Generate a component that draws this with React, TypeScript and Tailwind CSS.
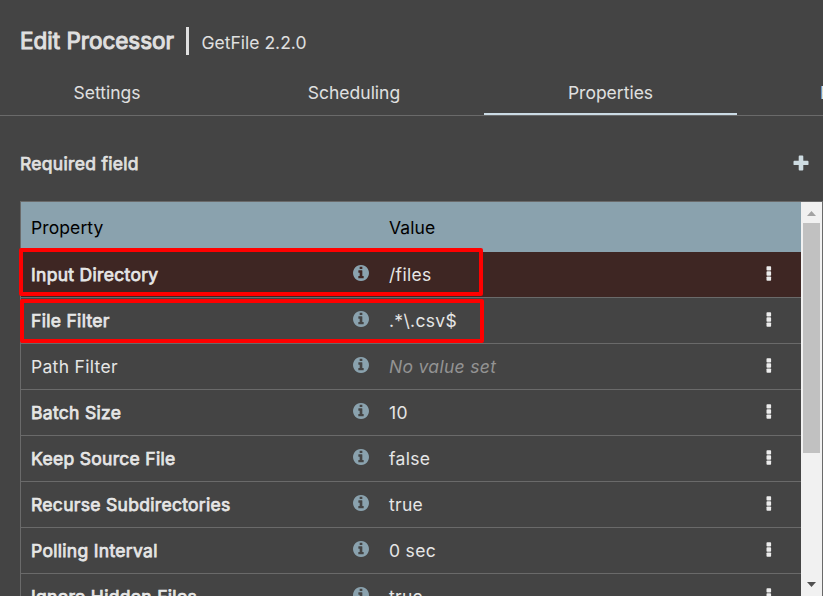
type Property = { name: string; value?: string; required: boolean; invalid?: boolean };

const properties: Property[] = [
  { name: 'Input Directory', value: '/files', required: true, invalid: true },
  { name: 'File Filter', value: '.*\\.csv$', required: true },
  { name: 'Path Filter', required: false },
  { name: 'Batch Size', value: '10', required: true },
  { name: 'Keep Source File', value: 'false', required: true },
  { name: 'Recurse Subdirectories', value: 'true', required: true },
  { name: 'Polling Interval', value: '0 sec', required: true },
  { name: 'Ignore Hidden Files', value: 'true', required: true },
];

function InfoIcon() {
  return (
    <svg className="mb-[2.5px]" width="16" height="16" viewBox="0 0 1536 1536" fill="#8aa2ae">
      <path d="M1024 1248v-160q0-14-9-23t-23-9h-96V544q0-14-9-23t-23-9H544q-14 0-23 9t-9 23v160q0 14 9 23t23 9h96v320h-96q-14 0-23 9t-9 23v160q0 14 9 23t23 9h448q14 0 23-9t9-23zM896 352V192q0-14-9-23t-23-9H672q-14 0-23 9t-9 23v160q0 14 9 23t23 9h192q14 0 23-9t9-23zM1536 768q0 209-103 385.5T1153.500 1433 768 1536t-385.500-103T103 1153.500 0 768t103-385.500T382.500 103 768 0t385.500 103T1433 382.500 1536 768z" />
    </svg>
  );
}

function MoreIcon() {
  return (
    <svg width="6" height="15" viewBox="0 0 6 15" fill="#ececec">
      <rect x="0.5" y="0.2" width="4.6" height="4.4" rx="0.8" />
      <rect x="0.5" y="5.3" width="4.6" height="4.4" rx="0.8" />
      <rect x="0.5" y="10.4" width="4.6" height="4.4" rx="0.8" />
    </svg>
  );
}

function PropertyRow({ property }: { property: Property }) {
  return (
    <div
      className={`flex h-[46px] shrink-0 items-center border-b border-[#6a6a6a] pl-2.5 tracking-[0.31px] ${property.invalid ? 'bg-[#3e2623]' : ''}`}
    >
      <span className={`w-[322px] ${property.required ? '[-webkit-text-stroke:0.75px_#e6e6e6]' : ''}`}>
        {property.name}
      </span>
      <InfoIcon />
      <span className={`ml-5 flex-1 ${property.value ? '' : 'text-[#939393] italic'}`}>
        {property.value ?? 'No value set'}
      </span>
      <span className="mr-[29px] mb-0.5 flex">
        <MoreIcon />
      </span>
    </div>
  );
}

export default function App() {
  return (
    <div className="relative flex h-[596px] w-[823px] flex-col overflow-hidden bg-[#444444] font-['Inter',sans-serif] text-[17.5px] leading-6 text-[#e6e6e6]">
      <header className="flex h-[70px] shrink-0 items-center pt-3 pl-5 whitespace-nowrap">
        <h1 className="w-[166px] text-[22.5px] text-[#e0e0e0] [-webkit-text-stroke:1px_#e0e0e0]">Edit Processor</h1>
        <div className="h-7 w-[3px] bg-[#e0e0e0]" />
        <span className="mt-1 ml-[12.5px] text-[#e0e0e0]">GetFile 2.2.0</span>
      </header>

      <nav className="flex h-[46px] shrink-0 border-b border-[#6a6a6a] text-[#e0e0e0]">
        <div className="flex w-[224px] shrink-0 items-center justify-center pr-2.5">Settings</div>
        <div className="flex w-[260px] shrink-0 items-center justify-center">Scheduling</div>
        <div className="flex w-[253px] shrink-0 items-center justify-center border-b-2 border-[#cbdbe5] pt-0.5">
          Properties
        </div>
        <div className="flex shrink-0 items-center pl-[83px]">Relationships</div>
      </nav>

      <div className="flex h-[85px] shrink-0 items-center justify-between pr-3.5 pl-5">
        <span className="mt-2.5 tracking-[0.31px] text-[#e0e0e0] [-webkit-text-stroke:0.75px_#e0e0e0]">Required field</span>
        <svg className="mt-2" width="16" height="16" viewBox="0 0 16 16" fill="#cddbe1">
          <path d="M6.6 0.5h2.8q.9 0 .9.9v4.4h4.3q.9 0 .9.9v2.5q0 .9-.9.9h-4.3v4.4q0 .9-.9.9H6.6q-.9 0-.9-.9v-4.4H1.4q-.9 0-.9-.9V6.7q0-.9.9-.9h4.3V1.4q0-.9.9-.9z" />
        </svg>
      </div>

      <div className="ml-5 flex h-[395px] w-[803px] overflow-hidden border-t border-r border-l border-[#6a6a6a]">
        <div className="flex w-[780px] shrink-0 flex-col">
          <div className="flex h-[50px] shrink-0 items-center bg-[#8aa2ae] pt-px pl-2.5 tracking-[0.1px] text-black">
            <span className="w-[358px]">Property</span>
            <span>Value</span>
          </div>
          {properties.map((property) => (
            <PropertyRow key={property.name} property={property} />
          ))}
        </div>
        <div className="flex w-[21px] shrink-0 flex-col items-center bg-[#f1f1f1]">
          <div className="flex h-[21px] w-full shrink-0 items-center justify-center pt-0.5">
            <svg width="9" height="5" viewBox="0 0 9 5" fill="#a3a3a3">
              <path d="M4.5 0L9 5H0z" />
            </svg>
          </div>
          <div className="h-[230px] w-[17px] shrink-0 bg-[#c1c1c1]" />
          <div className="mt-auto flex h-[22px] w-full items-center justify-center pb-px">
            <svg width="9" height="5" viewBox="0 0 9 5" fill="#505050">
              <path d="M4.5 5L0 0h9z" />
            </svg>
          </div>
        </div>
      </div>

      <div className="absolute top-[248px] left-[19px] h-[48px] w-[464px] rounded-[2px] border-4 border-[#ff0000]" />
      <div className="absolute top-[299px] left-[20px] h-[44px] w-[464px] rounded-[2px] border-4 border-[#ff0000]" />
    </div>
  );
}
